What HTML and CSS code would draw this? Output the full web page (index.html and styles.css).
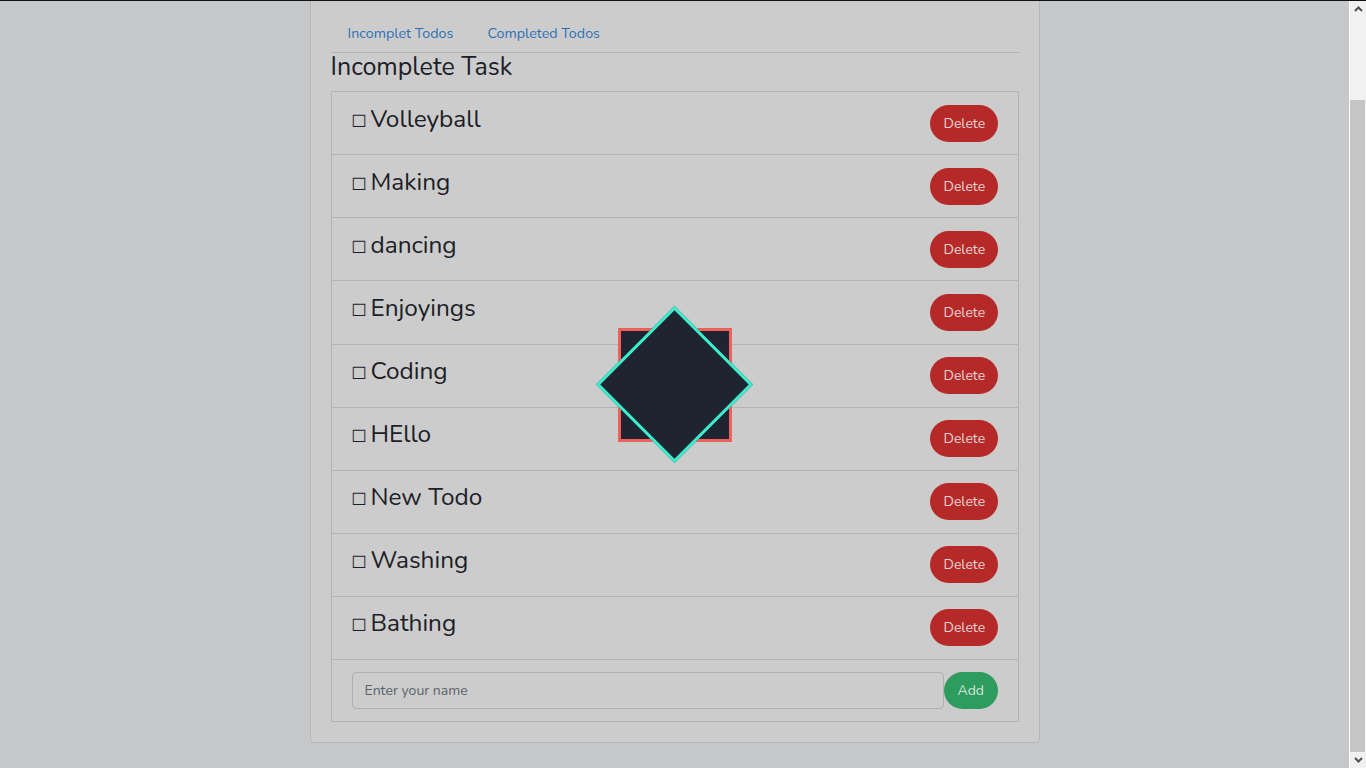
FILE: index.html
```html
<!DOCTYPE html>
<html lang="en">
<head>
<meta charset="utf-8">
<title>Todos</title>
<link rel="stylesheet" href="styles.css">
</head>
<body>
<div class="window">
  <div class="viewport">
    <main class="page">
      <section class="card">
        <nav class="tabs">
          <a class="tab" href="#">Incomplet Todos</a>
          <a class="tab" href="#">Completed Todos</a>
        </nav>
        <h4 class="title">Incomplete Task</h4>
        <ul class="list">
          <li class="item"><span class="label"><span class="check">☐</span>Volleyball</span><button class="btn btn-delete">Delete</button></li>
          <li class="item"><span class="label"><span class="check">☐</span>Making</span><button class="btn btn-delete">Delete</button></li>
          <li class="item"><span class="label"><span class="check">☐</span>dancing</span><button class="btn btn-delete">Delete</button></li>
          <li class="item"><span class="label"><span class="check">☐</span>Enjoyings</span><button class="btn btn-delete">Delete</button></li>
          <li class="item"><span class="label"><span class="check">☐</span>Coding</span><button class="btn btn-delete">Delete</button></li>
          <li class="item"><span class="label"><span class="check">☐</span>HEllo</span><button class="btn btn-delete">Delete</button></li>
          <li class="item"><span class="label"><span class="check">☐</span>New Todo</span><button class="btn btn-delete">Delete</button></li>
          <li class="item"><span class="label"><span class="check">☐</span>Washing</span><button class="btn btn-delete">Delete</button></li>
          <li class="item"><span class="label"><span class="check">☐</span>Bathing</span><button class="btn btn-delete">Delete</button></li>
          <li class="item item-form">
            <input class="input" type="text" placeholder="Enter your name">
            <button class="btn btn-add">Add</button>
          </li>
        </ul>
      </section>
    </main>
    <div class="loader">
      <div class="spinner">
        <div class="sq sq-base"></div>
        <div class="sq sq-rot"></div>
      </div>
    </div>
  </div>
  <div class="scrollbar">
    <div class="sb-btn">
      <svg width="9" height="6" viewBox="0 0 9 6"><path d="M1 5 L4.5 1.5 L8 5" fill="none" stroke="#505050" stroke-width="2"/></svg>
    </div>
    <div class="sb-track"><div class="sb-thumb"></div></div>
    <div class="sb-btn">
      <svg width="9" height="6" viewBox="0 0 9 6"><path d="M1 1 L4.5 4.5 L8 1" fill="none" stroke="#505050" stroke-width="2"/></svg>
    </div>
  </div>
</div>
</body>
</html>
```
FILE: styles.css
```css
* { box-sizing: border-box; }
html, body { margin: 0; padding: 0; height: 100%; overflow: hidden; }
body {
  background: #c6c7c9;
  font-family: "Nunito", Lato, "Noto Sans", sans-serif;
  color: #1c2026;
}
.window {
  display: flex;
  height: 100vh;
  border-top: 1px solid #111;
}
.viewport {
  position: relative;
  flex: 1;
  min-width: 0;
  overflow: hidden;
  display: flex;
  flex-direction: column;
  justify-content: flex-end;
}
.page {
  flex: none;
  padding: 91px 0 25px;
}
.card {
  width: 730px;
  margin: 0 auto;
  background: #cccccc;
  border: 1px solid #b6b6b6;
  border-radius: 4px;
  padding: 20px;
}
.tabs {
  display: flex;
  height: 38px;
  border-bottom: 1px solid #b2b5b8;
}
.tab {
  display: block;
  padding: 0 16px;
  border: 1px solid transparent;
  line-height: 35px;
  font-size: 14.3px;
  color: #2e70b4;
  text-decoration: none;
}
.title {
  margin: 0 0 9px;
  font-size: 25px;
  font-weight: 400;
  line-height: 29px;
}
.list {
  list-style: none;
  margin: 0;
  padding: 0;
  border: 1px solid #b4b4b4;
}
.item {
  display: flex;
  align-items: flex-start;
  justify-content: space-between;
  padding: 12.56px 20px;
  border-bottom: 1px solid #b4b4b4;
}
.item:last-child { border-bottom: 0; }
.label {
  font-size: 24.4px;
  line-height: 29px;
}
.check {
  display: inline-block;
  width: 19px;
  font-family: "DejaVu Sans", sans-serif;
  font-size: 17px;
  vertical-align: 0;
}
.btn {
  height: 37px;
  border: 0;
  border-radius: 19px;
  font-family: inherit;
  font-size: 14px;
  padding: 0 14px;
  cursor: pointer;
}
.btn-delete {
  width: 68px;
  background: #b52a28;
  color: #e6d2d2;
}
.item-form {
  align-items: center;
  padding: 12px 20px;
}
.input {
  flex: 1;
  height: 37px;
  border: 1px solid #b0b0b0;
  border-radius: 4px;
  background: #cccccc;
  padding: 0 12px;
  font-family: inherit;
  font-size: 14px;
  color: #1c2026;
}
.input::placeholder { color: #5b636a; }
.btn-add {
  width: 54px;
  background: #2e9c5e;
  color: #d4e6da;
}
.loader {
  position: absolute;
  inset: 0;
  display: flex;
  align-items: center;
  justify-content: center;
  pointer-events: none;
}
.spinner {
  position: relative;
  width: 114px;
  height: 114px;
}
.sq {
  position: absolute;
  background: #1e2530;
}
.sq-base {
  inset: 0;
  border: 3px solid #f0605a;
}
.sq-rot {
  width: 111px;
  height: 111px;
  left: 1.5px;
  top: 1.5px;
  border: 3px solid #3cefce;
  transform: rotate(45deg);
}
.scrollbar {
  flex: none;
  width: 17px;
  display: flex;
  flex-direction: column;
  background: #f1f1f1;
  border-left: 1px solid #fbfbfb;
}
.sb-btn {
  height: 16px;
  flex: none;
  display: flex;
  align-items: center;
  justify-content: center;
}
.sb-track {
  flex: 1;
  display: flex;
  flex-direction: column;
  justify-content: flex-end;
}
.sb-thumb {
  height: 652px;
  margin-right: 1px;
  background: #c6c6c6;
}
```
